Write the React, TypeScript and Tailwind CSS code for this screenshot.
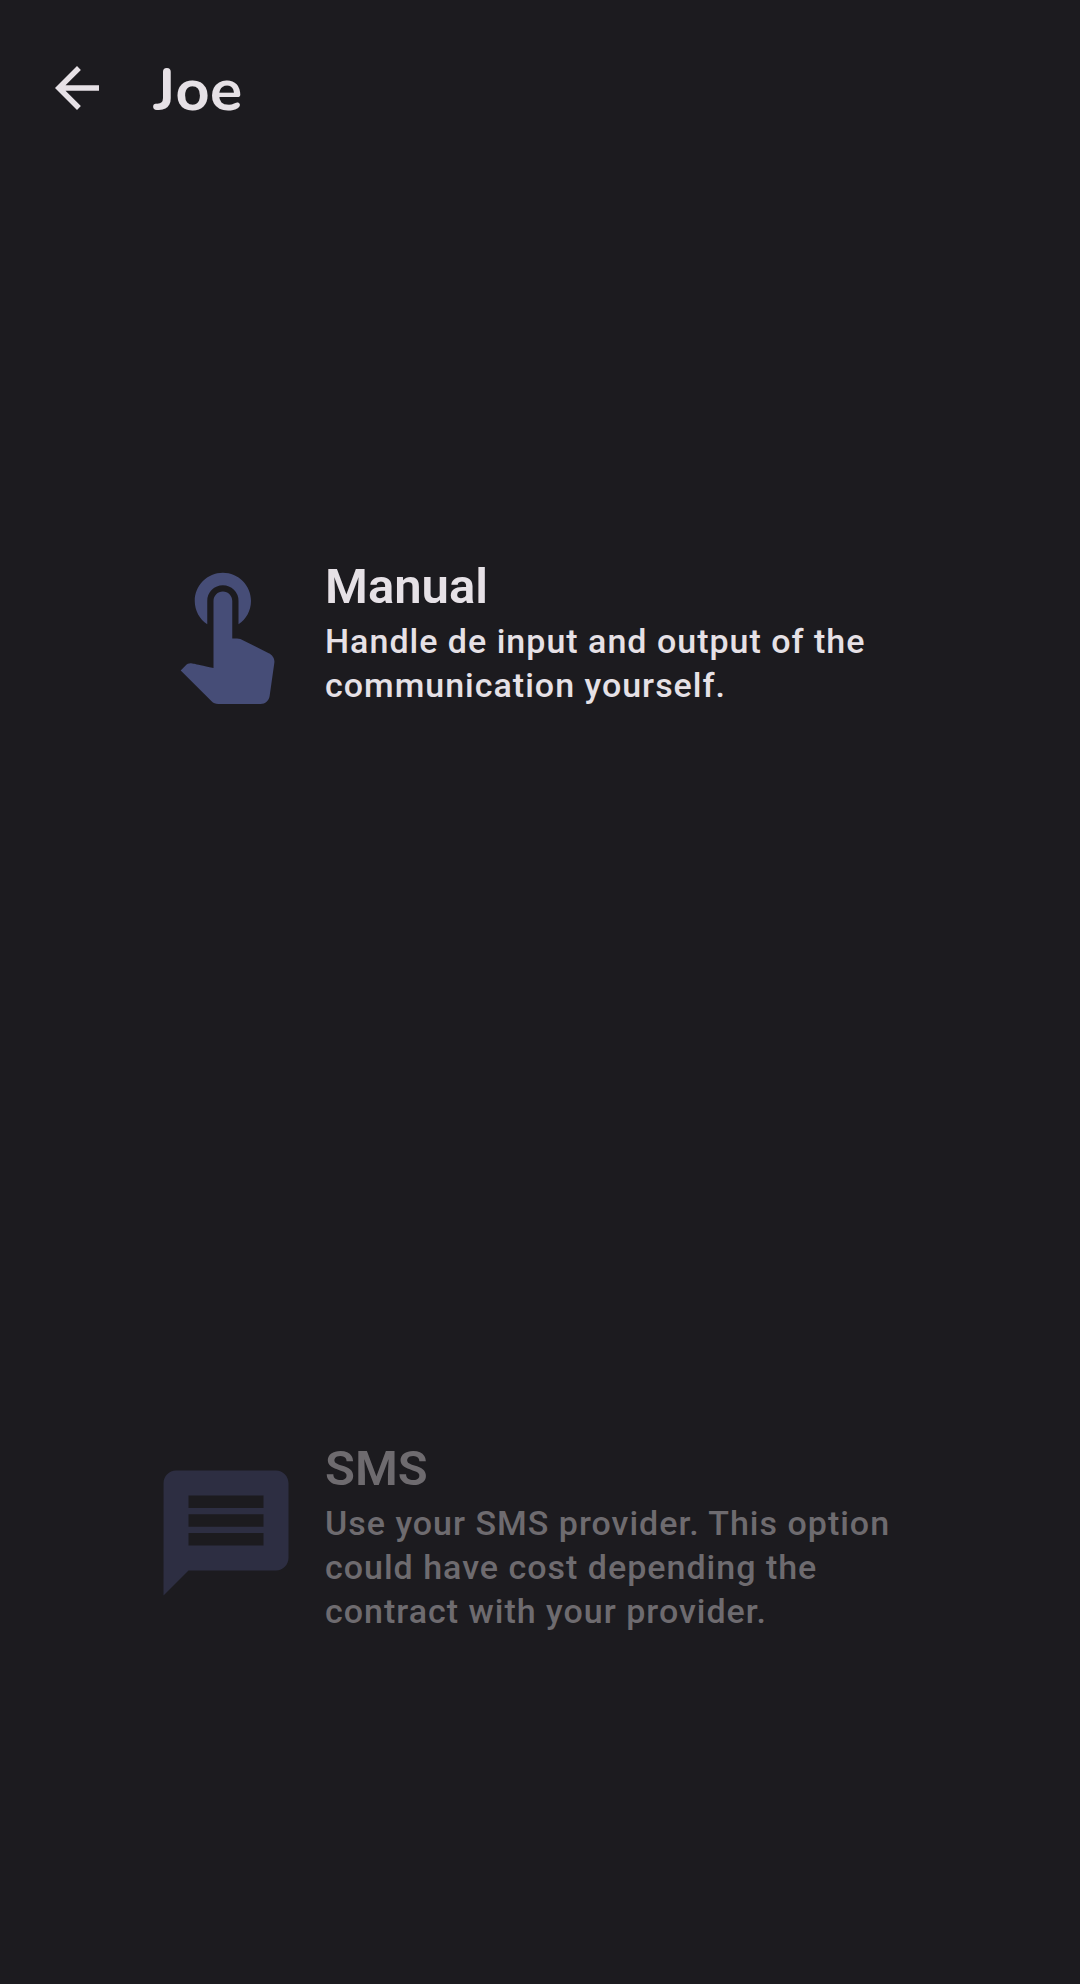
import { MdArrowBack, MdMessage, MdTouchApp } from "react-icons/md";
import type { ReactNode } from "react";

type OptionProps = {
  icon: ReactNode;
  title: string;
  text: string;
  disabled?: boolean;
};

function Option({ icon, title, text, disabled = false }: OptionProps) {
  return (
    <button
      type="button"
      disabled={disabled}
      className="flex flex-1 items-center gap-6 px-[151px] pt-6 text-left text-[#e6e1e6] disabled:text-[#6e6b6f]"
    >
      <span className={disabled ? "shrink-0 text-[#2d2e42]" : "shrink-0 text-[#464d77]"}>{icon}</span>
      <span className="flex flex-1 flex-col pt-1">
        <span className="text-[49px] leading-[64px] font-semibold">{title}</span>
        <span className="text-[34px] leading-[44px] font-medium tracking-[1px]">{text}</span>
      </span>
    </button>
  );
}

export default function App() {
  return (
    <div className="flex min-h-screen flex-col bg-[#1c1b1f] font-['Roboto',sans-serif]">
      <header className="flex h-44 items-center gap-11 px-11 text-[#e6e1e6]">
        <button type="button" aria-label="Back">
          <MdArrowBack size={66} />
        </button>
        <h1 className="pt-1 font-['Nunito','Lato',sans-serif] text-[60px] leading-[72px] font-bold">Joe</h1>
      </header>
      <main className="flex flex-1 flex-col">
        <Option
          icon={<MdTouchApp size={150} />}
          title="Manual"
          text="Handle de input and output of the communication yourself."
        />
        <Option
          icon={<MdMessage size={150} />}
          title="SMS"
          text="Use your SMS provider. This option could have cost depending the contract with your provider."
          disabled
        />
      </main>
    </div>
  );
}
